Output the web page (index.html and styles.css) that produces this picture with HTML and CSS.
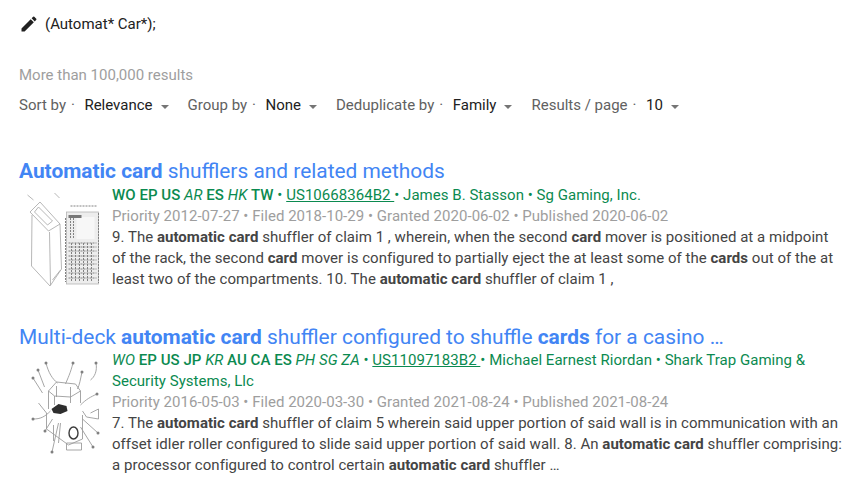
FILE: index.html
```html
<!DOCTYPE html>
<html lang="en">
<head>
<meta charset="utf-8">
<title>Patent search results</title>
<link rel="stylesheet" href="styles.css">
</head>
<body>
<div class="query">
  <svg class="pencil" viewBox="0 0 24 24" width="20" height="20"><path d="M3 17.25V21h3.75L17.81 9.94l-3.75-3.75L3 17.25zM20.71 7.04a1 1 0 0 0 0-1.41l-2.34-2.34a1 1 0 0 0-1.41 0l-1.83 1.83 3.75 3.75 1.83-1.83z"/></svg>
  <span>(Automat* Car*);</span>
</div>
<div class="count">More than 100,000 results</div>
<div class="controls">
  <div class="control"><span class="label">Sort by</span><span class="dot">·</span><span class="value">Relevance</span><span class="caret"></span></div>
  <div class="control"><span class="label">Group by</span><span class="dot">·</span><span class="value">None</span><span class="caret"></span></div>
  <div class="control"><span class="label">Deduplicate by</span><span class="dot">·</span><span class="value">Family</span><span class="caret"></span></div>
  <div class="control"><span class="label">Results / page</span><span class="dot">·</span><span class="value">10</span><span class="caret"></span></div>
</div>

<article class="result first">
  <h2 class="title"><b>Automatic card</b> shufflers and related methods</h2>
  <div class="body">
    <svg class="thumb" viewBox="0 0 90 100" width="93" height="100">
      <g fill="none" stroke="#a4a4a4" stroke-width=".8">
        <path d="M19.5 14 39.5 36 28 43 9.5 24Z"/>
        <path d="M18 19 32 33 27 37 14 24Z"/>
        <path d="M39.5 36 41 81 29.500 98 11 78 11.500 27"/>
        <path d="M29 44 30 97M32 92 40 82"/>
        <path d="M7 7 13 12M34 5 39 10"/>
      </g>
      <rect x="46" y="24" width="32" height="72" fill="#ededed" stroke="#b4b4b4" stroke-width=".8"/>
      <g fill="none" stroke="#828282" stroke-width="1" stroke-dasharray="2 1">
        <path d="M50 30V50M53 30V50M48 55H76M48 59H76M48 63H76M48 68H76M48 72H76M48 76H76M48 81H76M48 85H76M48 90H76"/>
        <path d="M51 55V94M55 55V94M59 55V94M63 55V94M67 55V94M71 55V94M78 25V95M45 30V94"/>
        <path d="M50 18H76"/>
      </g>
      <rect x="56" y="29" width="18" height="22" fill="#f7f7f7"/>
      <path d="M48 27H61V30H48Z" fill="#777"/>
    </svg>
    <div class="text">
      <div class="meta"><span class="cc"><b>WO</b> <b>EP</b> <b>US</b> <i>AR</i> <b>ES</b> <i>HK</i> <b>TW</b></span> • <u>US10668364B2 </u> • James B. Stasson • Sg Gaming, Inc.</div>
      <div class="dates">Priority 2012-07-27 • Filed 2018-10-29 • Granted 2020-06-02 • Published 2020-06-02</div>
      <div class="snippet">9. The <b>automatic card</b> shuffler of claim 1 , wherein, when the second <b>card</b> mover is positioned at a midpoint of the rack, the second <b>card</b> mover is configured to partially eject the at least some of the <b>cards</b> out of the at least two of the compartments. 10. The <b>automatic card</b> shuffler of claim 1 ,</div>
    </div>
  </div>
</article>

<article class="result second">
  <h2 class="title">Multi-deck <b>automatic card</b> shuffler configured to shuffle <b>cards</b> for a casino …</h2>
  <div class="body">
    <svg class="thumb" viewBox="0 0 90 103" width="93" height="103">
      <g fill="none" stroke="#9c9c9c" stroke-width=".9">
        <path d="M28 38 36 29 55 31 60 38 50 44 34 43Z"/>
        <path d="M28 38V56M36 33V44M50 34V50M60 38V50M34 43V52"/>
        <path d="M18 50 26 60V76L48 92 62 86V62"/>
        <path d="M62 58 66 64 78 66 78 56 70 60"/>
        <path d="M46 90H61V97H46Z"/>
        <path d="M33 72V88M40 70 38 90"/>
        <path d="M25.500 10C28 20 32 26 37 30M52.500 10C50 20 47 26 45 31M61.500 19C60 26 59 32 57 36M75.500 10C77 18 74 24 70 27M76.500 41C70 44 66 46 60 52M12.500 25 22 40M17.500 17 24 34M12.500 66C20 66 24 64 30 58M24.500 78 32 66M31.500 99 38 70M77.500 80 62 66M72.500 94 60 74"/>
      </g>
      <path d="M31 56 38 51 46 53 47 58 40 61 33 60Z" fill="#2e2e2e"/>
      <ellipse cx="53" cy="80" rx="4.500" ry="6" fill="none" stroke="#3c3c3c" stroke-width="1.400"/>
      <g fill="#808080"><circle cx="25.500" cy="10" r="1.500"/><circle cx="52.500" cy="10" r="1.500"/><circle cx="61.500" cy="19" r="1.500"/><circle cx="75.500" cy="10" r="1.500"/><circle cx="76.500" cy="41" r="1.500"/><circle cx="17.500" cy="17" r="1.500"/><circle cx="12.500" cy="25" r="1.500"/><circle cx="12.500" cy="66" r="1.500"/><circle cx="24.500" cy="78" r="1.500"/><circle cx="31.500" cy="99" r="1.500"/><circle cx="77.500" cy="80" r="1.500"/><circle cx="72.500" cy="94" r="1.500"/></g>
    </svg>
    <div class="text">
      <div class="meta"><span class="cc"><i>WO</i> <b>EP</b> <b>US</b> <b>JP</b> <i>KR</i> <b>AU</b> <b>CA</b> <b>ES</b> <i>PH</i> <i>SG</i> <i>ZA</i></span> • <u>US11097183B2 </u> • Michael Earnest Riordan • Shark Trap Gaming &amp; Security Systems, Llc</div>
      <div class="dates">Priority 2016-05-03 • Filed 2020-03-30 • Granted 2021-08-24 • Published 2021-08-24</div>
      <div class="snippet">7. The <b>automatic card</b> shuffler of claim 5 wherein said upper portion of said wall is in communication with an offset idler roller configured to slide said upper portion of said wall. 8. An <b>automatic card</b> shuffler comprising: a processor configured to control certain <b>automatic card</b> shuffler …</div>
    </div>
  </div>
</article>
</body>
</html>
```
FILE: styles.css
```css
html, body { margin: 0; padding: 0; }
body {
  width: 851px;
  height: 497px;
  overflow: hidden;
  background: #fff;
  font-family: Roboto, sans-serif;
  font-size: 15px;
  line-height: 21px;
  color: #444;
  padding-left: 19px;
  box-sizing: border-box;
}
.query {
  display: flex;
  align-items: center;
  gap: 6px;
  padding-top: 14px;
  height: 20px;
  color: #212121;
}
.pencil { fill: #212121; flex: none; }
.count { margin-top: 31px; color: #9e9e9e; }
.controls { display: flex; gap: 19px; margin-top: 9px; }
.control { display: flex; align-items: center; }
.label { color: #616161; }
.dot { color: #616161; margin: 0 9.5px 0 5px; }
.value { color: #212121; }
.caret {
  width: 0; height: 0; margin-left: 8px; margin-top: 2px;
  border-left: 4px solid transparent;
  border-right: 4px solid transparent;
  border-top: 4px solid #757575;
}
.result { margin-top: 41px; }
.result.second { margin-top: 33px; }
.second .title { margin-bottom: -1px; }
.title {
  margin: 0;
  font-size: 20.9px;
  line-height: 28px;
  font-weight: 400;
  color: #4285f4;
  white-space: nowrap;
}
.title b { font-weight: 700; }
.body { display: flex; }
.thumb { flex: none; margin-top: 3px; filter: blur(.5px); }
.text { width: 730px; letter-spacing: .035px; }
.meta { color: #0b8a50; }
.cc b { font-weight: 500; }
.meta u { text-decoration: underline; }
.dates { color: #9e9e9e; }
.snippet { color: #444; }
.snippet b { font-weight: 700; }
```
